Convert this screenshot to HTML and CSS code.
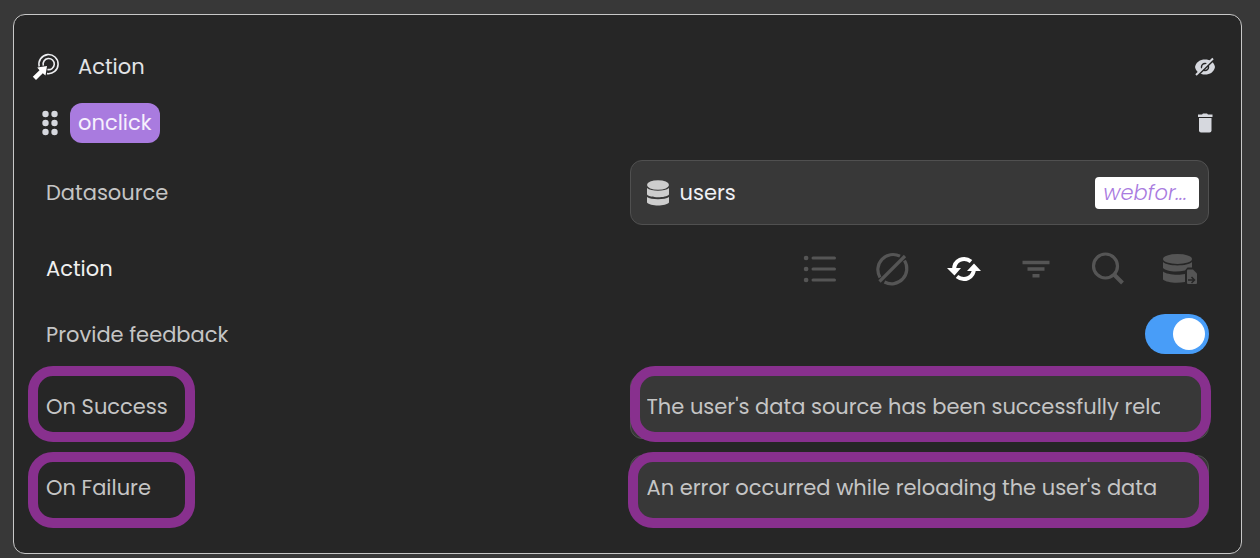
FILE: index.html
```html
<!DOCTYPE html>
<html lang="en">
<head>
<meta charset="utf-8">
<meta name="viewport" content="width=device-width, initial-scale=1">
<title>Action</title>
<link rel="stylesheet" href="styles.css">
</head>
<body>
<main class="panel">
  <header class="head">
    <svg class="target" width="28" height="28" viewBox="0 0 28 28" fill="none" stroke="#eeeff2" stroke-width="1.6">
      <path d="M7.200 13.500A9.600 9.600 0 1 1 15 20.600"/>
      <path d="M11.300 12.600A5.600 5.600 0 1 1 15.400 16.500"/>
      <path d="M15 13 13.500 22.500 10.800 20.200 4 27 .8 23.800 7.500 17.200 5.200 14.500Z" fill="#fff" stroke="none"/>
    </svg>
    <h1 class="title">Action</h1>
    <button class="icon" type="button" aria-label="Hide">
      <svg width="22" height="20" viewBox="0 0 22 20">
        <path d="M1 10C2 5 6 2.500 11 2.500S20 5 21 10C20 15 16 17.500 11 17.500S2 15 1 10Z" fill="#d6d8de"/>
        <circle cx="11" cy="10" r="3.500" fill="none" stroke="#262626" stroke-width="1.500"/>
        <path d="M3 19 20.500 2" stroke="#262626" stroke-width="2"/>
        <path d="M2 18 19 1.500" stroke="#d6d8de" stroke-width="2"/>
      </svg>
    </button>
  </header>

  <div class="event">
    <svg class="grip" width="16" height="26" viewBox="0 0 16 26" fill="#d6d8de">
      <circle cx="3.500" cy="4" r="3.200"/><circle cx="12.500" cy="4" r="3.200"/>
      <circle cx="3.500" cy="13" r="3.200"/><circle cx="12.500" cy="13" r="3.200"/>
      <circle cx="3.500" cy="22" r="3.200"/><circle cx="12.500" cy="22" r="3.200"/>
    </svg>
    <span class="tag">onclick</span>
    <button class="icon" type="button" aria-label="Delete">
      <svg width="22" height="20" viewBox="0 0 22 20" fill="#d6d8de">
        <path d="M4 1.500H8L9 .5H13L14 1.500H18.500V4H4Z"/>
        <path d="M5 5H17.500V17.500Q17.500 19.500 15.500 19.500H7Q5 19.500 5 17.500Z"/>
      </svg>
    </button>
  </div>

  <div class="row source-row">
    <span class="label" id="source-label">Datasource</span>
    <button class="box source" type="button" aria-labelledby="source-label source-name">
      <svg width="22" height="26" viewBox="0 0 22 26" fill="#cdcdcd">
        <ellipse cx="11" cy="5" rx="11" ry="4.800"/>
        <path d="M0 8C4 11.500 18 11.500 22 8V14.500C19 18.200 3 18.200 0 14.500Z"/>
        <path d="M0 17C4 20 18 20 22 17V22.500C19 26.500 3 26.500 0 22.500Z"/>
      </svg>
      <span class="name" id="source-name">users</span>
      <span class="badge">webfor...</span>
    </button>
  </div>

  <div class="row action-row">
    <span class="label strong">Action</span>
    <div class="tools">
      <button class="tool" type="button" aria-label="List">
        <svg width="36" height="36" viewBox="0 0 36 36" fill="none" stroke="currentColor" stroke-width="3" stroke-linecap="round">
          <path d="M11 7H32.500M11 18H32.500M11 29H32.500"/>
          <path d="M4 7H4.200M4 18H4.200M4 29H4.200" stroke-width="4.500"/>
        </svg>
      </button>
      <button class="tool" type="button" aria-label="None">
        <svg width="36" height="36" viewBox="0 0 36 36" fill="none" stroke="currentColor" stroke-width="3.200">
          <path d="M6 26.500A15.200 15.200 0 0 1 26 5.200"/>
          <path d="M30.500 9.500A15.200 15.200 0 0 1 10.500 31"/>
          <path d="M5.500 30.500 31 5"/>
        </svg>
      </button>
      <button class="tool active" type="button" aria-label="Reload">
        <svg width="36" height="36" viewBox="0 0 36 36" fill="none" stroke="currentColor" stroke-width="4">
          <path d="M8 19C8 9 18 5 25 10.500"/>
          <path d="M28 17C28 27 18 31 11 25.500"/>
          <path d="M1 17H15L8.500 24.500ZM21 20H35L28 12.500Z" fill="currentColor" stroke="none"/>
        </svg>
      </button>
      <button class="tool" type="button" aria-label="Filter">
        <svg width="36" height="36" viewBox="0 0 36 36" fill="none" stroke="currentColor" stroke-width="3.500">
          <path d="M4.500 11.500H31.500M9.500 18H26.500M14.500 24.800H21.500"/>
        </svg>
      </button>
      <button class="tool" type="button" aria-label="Search">
        <svg width="36" height="36" viewBox="0 0 36 36" fill="none" stroke="currentColor" stroke-width="3.200">
          <circle cx="15.500" cy="15" r="12"/>
          <path d="M24 23.500 32.500 32" stroke-width="4"/>
        </svg>
      </button>
      <button class="tool" type="button" aria-label="Save to datasource">
        <svg width="36" height="36" viewBox="0 0 36 36" fill="currentColor">
          <ellipse cx="15.500" cy="8" rx="14.500" ry="5"/>
          <path d="M1 11C5 15.500 26 15.500 30 11V16.500H25.500L23 19.500C14 21.500 4 20.500 1 17Z"/>
          <path d="M1 20.500C4 23.500 16 24.500 23 23V31C14 32.500 4 31.500 1 28.500Z"/>
          <path d="M25 19.500Q25 18.500 26 18.500H31L35 22.500V32Q35 33 34 33H26Q25 33 25 32Z"/>
          <path d="M26 29H32M29.500 26 32.500 29 29.500 32" fill="none" stroke="#262626" stroke-width="1.500"/>
        </svg>
      </button>
    </div>
  </div>

  <div class="row feedback-row">
    <label class="label" for="feedback">Provide feedback</label>
    <input class="switch" id="feedback" type="checkbox" role="switch" checked>
  </div>

  <div class="row message-row success">
    <label class="label" for="success">On Success</label>
    <input class="box message" id="success" type="text" value="The user's data source has been successfully reloaded">
    <span class="mark mark-label"></span>
    <span class="mark mark-field"></span>
  </div>

  <div class="row message-row failure">
    <label class="label" for="failure">On Failure</label>
    <input class="box message" id="failure" type="text" value="An error occurred while reloading the user's data">
    <span class="mark mark-label"></span>
    <span class="mark mark-field"></span>
  </div>
</main>
</body>
</html>
```
FILE: styles.css
```css
* {
  box-sizing: border-box;
}

body {
  margin: 0;
  padding: 14px 18px 4px 13px;
  background: #383838;
  color: #c5c5c5;
  font-family: Poppins, Inter, sans-serif;
  font-size: 21px;
  line-height: 32px;
}

button,
input {
  margin: 0;
  font: inherit;
  color: inherit;
}

button {
  padding: 0;
  border: 0;
  background: none;
}

svg {
  display: block;
  flex: none;
}

.panel {
  padding: 36px 32px 33px;
  border: 1px solid #c8c8c8;
  border-radius: 12px;
  background: #262626;
}

.head,
.event {
  display: flex;
  align-items: center;
}

.head {
  margin: 0 -11px 20px -14px;
}

.title {
  margin: 0 0 0 18px;
  color: #e2e3e6;
  font-size: 21px;
  font-weight: 400;
}

.icon {
  margin-left: auto;
  padding: 0 4px;
}

.event {
  margin: 0 -11px 17px -4px;
}

.tag {
  margin-left: 12px;
  padding: 4px 8px;
  border-radius: 12px;
  background: #a97bdf;
  color: #f6f0fd;
}

.row {
  position: relative;
  display: grid;
  grid-template-columns: 1fr 1fr;
  column-gap: 4px;
  align-items: center;
}

.strong {
  color: #f0f0f0;
}

.box {
  width: 100%;
  height: 65px;
  border: 1px solid #505050;
  border-radius: 12px;
  background: #383838;
}

.source {
  display: flex;
  align-items: center;
  padding: 0 9px 0 16px;
}

.name {
  margin-left: 11px;
  color: #f0f1f5;
}

.badge {
  margin-left: auto;
  padding: 0 12px 0 8px;
  border-radius: 4px;
  background: #fff;
  color: #a97bdf;
  font-style: italic;
  font-weight: 300;
}

.source-row {
  margin-bottom: 26px;
}

.action-row {
  margin-bottom: 27px;
}

.tools {
  display: flex;
  justify-content: flex-end;
  gap: 36px;
  padding-right: 11px;
}

.tool {
  color: #555;
}

.tool.active {
  color: #fff;
}

.feedback-row {
  margin-bottom: 20px;
}

.feedback-row .label {
  padding-top: 2px;
}

.switch {
  appearance: none;
  display: flex;
  justify-self: end;
  width: 64px;
  height: 40px;
  padding: 4px;
  border-radius: 20px;
  background: #489df8;
}

.switch::before {
  content: "";
  width: 32px;
  height: 32px;
  border-radius: 50%;
  background: #fff;
}

.switch:checked {
  justify-content: flex-end;
}

.message {
  padding: 0 48px 0 16px;
  outline: 0;
}

.success {
  margin-bottom: 16px;
}

.mark {
  position: absolute;
  height: 76px;
  border: 10px solid #88308e;
  border-radius: 25px;
  pointer-events: none;
}

.success .mark {
  top: -8px;
}

.failure .mark {
  top: -3px;
}

.mark-label {
  left: -18px;
  width: 167px;
}

.mark-field {
  left: calc(50% + 2px);
  right: -2px;
}

.failure .mark-field {
  left: 50%;
  right: 0;
}
```
